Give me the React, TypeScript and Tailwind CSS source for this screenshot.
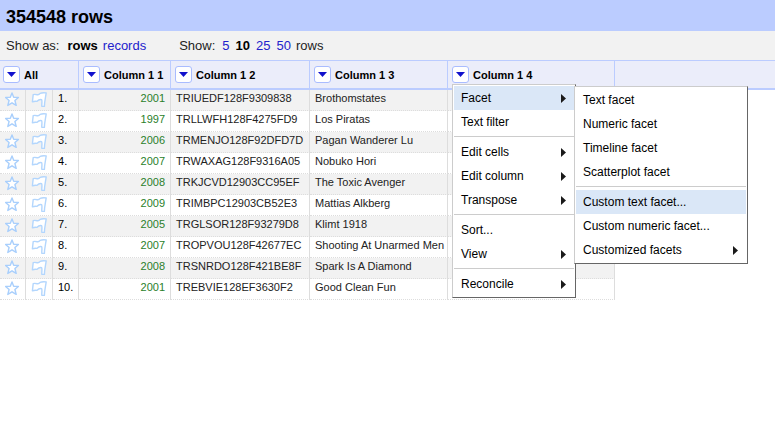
import React from "react";

type Row = { year: string; track: string; artist: string };

const rows: Row[] = [
  { year: "2001", track: "TRIUEDF128F9309838", artist: "Brothomstates" },
  { year: "1997", track: "TRLLWFH128F4275FD9", artist: "Los Piratas" },
  { year: "2006", track: "TRMENJO128F92DFD7D", artist: "Pagan Wanderer Lu" },
  { year: "2007", track: "TRWAXAG128F9316A05", artist: "Nobuko Hori" },
  { year: "2008", track: "TRKJCVD12903CC95EF", artist: "The Toxic Avenger" },
  { year: "2009", track: "TRIMBPC12903CB52E3", artist: "Mattias Alkberg" },
  { year: "2005", track: "TRGLSOR128F93279D8", artist: "Klimt 1918" },
  { year: "2007", track: "TROPVOU128F42677EC", artist: "Shooting At Unarmed Men" },
  { year: "2008", track: "TRSNRDO128F421BE8F", artist: "Spark Is A Diamond" },
  { year: "2001", track: "TREBVIE128EF3630F2", artist: "Good Clean Fun" },
];

function StarIcon() {
  return (
    <svg width="15" height="15" viewBox="0 0 15 15" className="block" aria-hidden="true">
      <path
        d="M7 0.9 L8.7 5.2 L13.4 5.4 L9.9 8.5 L11.2 13.4 L7 10.8 L2.8 13.4 L4.1 8.5 L0.6 5.4 L5.3 5.2 Z"
        fill="#fff"
        stroke="#a9cffc"
        strokeWidth="1.4"
        strokeLinejoin="round"
      />
    </svg>
  );
}

function FlagIcon() {
  return (
    <svg width="16" height="16" viewBox="0 0 16 16" className="block" aria-hidden="true">
      <path
        d="M15.2 0.9 C13 0.6 10.8 0.6 9.2 1.4 C8.4 2.4 7.4 3 6.2 2.7 C4.8 2.4 3.4 2.2 2.2 2.6 L1.4 9.8 C3 9.2 4.6 9 5.8 9.4 C7.2 8 8.8 7.2 10.6 7.6 C11.4 8.8 10.6 11.6 10.8 14.2 L13.4 14.4 C13.4 9.8 14.6 5.4 15.2 0.9 Z"
        fill="#fff"
        stroke="#b3d6fd"
        strokeWidth="1.4"
        strokeLinejoin="round"
      />
    </svg>
  );
}

function ColumnHead({ name }: { name: string }) {
  return (
    <div className="flex items-center gap-1">
      <button
        type="button"
        aria-label={`${name} menu`}
        className="flex size-[17px] shrink-0 items-center justify-center rounded-[3px] border border-[#a9bcff] bg-white"
      >
        <svg width="9" height="5" viewBox="0 0 9 5" aria-hidden="true">
          <path d="M0 0 H9 L4.5 5 Z" fill="#1111cc" />
        </svg>
      </button>
      <span className="pt-px leading-4 whitespace-nowrap">{name}</span>
    </div>
  );
}

function MenuPanel({ className, children }: { className: string; children: React.ReactNode }) {
  return (
    <div
      role="menu"
      className={`absolute border border-t-[#ccc] border-r-[#666] border-b-[#666] border-l-[#ccc] bg-white p-px text-xs font-normal text-black ${className}`}
    >
      {children}
    </div>
  );
}

function MenuItem({ label, arrow, active }: { label: string; arrow?: boolean; active?: boolean }) {
  return (
    <button
      type="button"
      role="menuitem"
      className={`flex h-6 w-full items-center justify-between pr-2 pl-[7px] text-left ${active ? "bg-[#dae7f7]" : ""}`}
    >
      <span className="whitespace-nowrap">{label}</span>
      {arrow && (
        <svg width="5" height="9" viewBox="0 0 5 9" aria-hidden="true">
          <path d="M0 0 L5 4.5 L0 9 Z" fill="#1a1a1a" />
        </svg>
      )}
    </button>
  );
}

function MenuLine() {
  return <div role="separator" className="mt-0.5 mb-[3px] h-px bg-[#ccc]" />;
}

function ColumnMenu() {
  return (
    <MenuPanel className="top-[23px] left-1 z-10 w-[124px]">
      <div className="relative">
        <MenuItem label="Facet" arrow active />
        <MenuPanel className="top-0 left-[120px] w-[174px]">
          <MenuItem label="Text facet" />
          <MenuItem label="Numeric facet" />
          <MenuItem label="Timeline facet" />
          <MenuItem label="Scatterplot facet" />
          <MenuLine />
          <MenuItem label="Custom text facet..." active />
          <MenuItem label="Custom numeric facet..." />
          <MenuItem label="Customized facets" arrow />
        </MenuPanel>
      </div>
      <MenuItem label="Text filter" />
      <MenuLine />
      <MenuItem label="Edit cells" arrow />
      <MenuItem label="Edit column" arrow />
      <MenuItem label="Transpose" arrow />
      <MenuLine />
      <MenuItem label="Sort..." />
      <MenuItem label="View" arrow />
      <MenuLine />
      <MenuItem label="Reconcile" arrow />
    </MenuPanel>
  );
}

const headCell = "h-[30px] border-t border-b-2 border-[#bbccff] px-1 text-left align-middle";
const bodyCell =
  "h-[21px] border-r border-b border-r-[#ddd] border-b-[#ddd] [border-bottom-style:dotted] px-[5px] align-top leading-4 whitespace-nowrap";
const link = "text-[#2222cc]";

export default function App() {
  return (
    <div className="min-h-screen overflow-x-hidden bg-white font-['Liberation_Sans',Arial,sans-serif] text-[#222]">
      <h1 className="bg-[#bbccff] px-1.5 pt-[5px] pb-0.5 text-lg leading-6 font-bold text-black">354548 rows</h1>
      <div className="flex h-[29px] items-center bg-[#f2f2f2] px-1.5 text-[13px]">
        <span>Show as:</span>
        <b className="ml-2 text-black">rows</b>
        <a href="#records" className={`ml-[5px] ${link}`}>records</a>
        <span className="ml-[33px]">Show:</span>
        <div className="ml-[7px] flex gap-1.5">
          <a href="#5" className={link}>5</a>
          <b className="text-black">10</b>
          <a href="#25" className={link}>25</a>
          <a href="#50" className={link}>50</a>
        </div>
        <span className="ml-[5px]">rows</span>
      </div>
      <table className="w-full table-fixed border-separate border-spacing-0 text-[11px]">
        <colgroup>
          <col className="w-[26px]" />
          <col className="w-[27px]" />
          <col className="w-[26px]" />
          <col className="w-[92px]" />
          <col className="w-[139px]" />
          <col className="w-[138px]" />
          <col className="w-[167px]" />
          <col />
        </colgroup>
        <thead>
          <tr className="bg-[#ebedfa] text-black">
            <th colSpan={3} className="h-[30px] border-t border-r border-b-2 border-[#bbccff] pr-1 pl-[3px] text-left align-middle">
              <ColumnHead name="All" />
            </th>
            <th className={`${headCell} border-r`}><ColumnHead name="Column 1 1" /></th>
            <th className={`${headCell} border-r`}><ColumnHead name="Column 1 2" /></th>
            <th className={`${headCell} border-r`}><ColumnHead name="Column 1 3" /></th>
            <th className={`${headCell} relative border-r`}>
              <ColumnHead name="Column 1 4" />
              <ColumnMenu />
            </th>
            <td className={headCell} />
          </tr>
        </thead>
        <tbody>
          {rows.map((row, i) => {
            const tone = i % 2 === 0 ? "bg-[#f2f2f2]" : "bg-white";
            return (
              <tr key={row.track}>
                <td className={`${bodyCell} ${tone}`}>
                  <button type="button" aria-label={`Star row ${i + 1}`} className="mt-0.5 block"><StarIcon /></button>
                </td>
                <td className={`${bodyCell} ${tone}`}>
                  <button type="button" aria-label={`Flag row ${i + 1}`} className="mt-0.5 block"><FlagIcon /></button>
                </td>
                <td className={`${bodyCell} ${tone} text-black`}>{i + 1}.</td>
                <td className={`${bodyCell} ${tone} text-right text-[#2a7f2a]`}>{row.year}</td>
                <td className={`${bodyCell} ${tone}`}>{row.track}</td>
                <td className={`${bodyCell} ${tone}`}>{row.artist}</td>
                <td className={`${bodyCell} ${tone}`} />
                <td />
              </tr>
            );
          })}
        </tbody>
      </table>
    </div>
  );
}
